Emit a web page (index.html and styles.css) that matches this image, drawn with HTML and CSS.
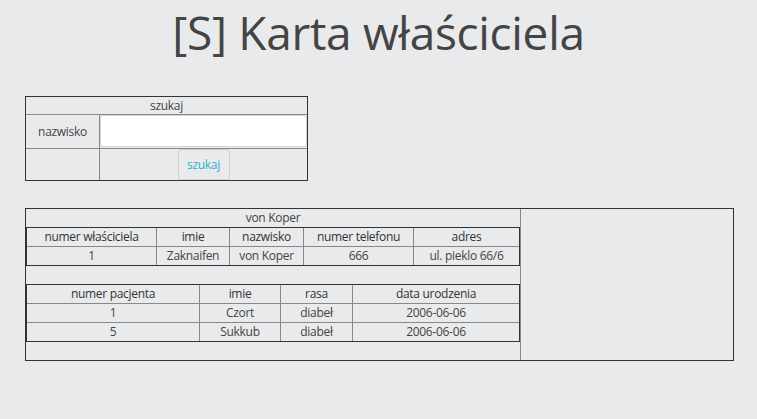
FILE: index.html
```html
<!DOCTYPE html>
<html lang="pl">
<head>
<meta charset="utf-8">
<title>[S] Karta właściciela</title>
<link rel="stylesheet" href="styles.css">
</head>
<body>
<h1 class="title">[S] Karta właściciela</h1>

<div class="search">
  <div class="cell head">szukaj</div>
  <div class="cell label">nazwisko</div>
  <div class="cell field"><input class="input" type="text"></div>
  <div class="cell"></div>
  <div class="cell btn-cell"><button class="btn" type="button">szukaj</button></div>
</div>

<div class="card">
  <div class="card-main">
    <div class="caption">von Koper</div>
    <div class="grid owner">
      <div class="c h">numer właściciela</div>
      <div class="c h">imie</div>
      <div class="c h">nazwisko</div>
      <div class="c h">numer telefonu</div>
      <div class="c h">adres</div>
      <div class="c">1</div>
      <div class="c">Zaknaifen</div>
      <div class="c">von Koper</div>
      <div class="c">666</div>
      <div class="c">ul. pieklo 66/6</div>
    </div>
    <div class="spacer"></div>
    <div class="grid pets">
      <div class="c h">numer pacjenta</div>
      <div class="c h">imie</div>
      <div class="c h">rasa</div>
      <div class="c h">data urodzenia</div>
      <div class="c">1</div>
      <div class="c">Czort</div>
      <div class="c">diabeł</div>
      <div class="c">2006-06-06</div>
      <div class="c">5</div>
      <div class="c">Sukkub</div>
      <div class="c">diabeł</div>
      <div class="c">2006-06-06</div>
    </div>
    <div class="spacer"></div>
  </div>
  <div class="card-side"></div>
</div>
</body>
</html>
```

FILE: styles.css
```css
html, body {
  background: #e9eaec;
}
body {
  margin: 0;
  padding: 8px 8px 8px 25px;
  font-family: "Open Sans", "DejaVu Sans", sans-serif;
  font-size: 12px;
  letter-spacing: -0.3px;
  color: #444;
}
.title {
  margin: 0 0 0 -17px;
  padding-top: 0;
  height: 88px;
  text-align: center;
  font-weight: 400;
  font-size: 46px;
  line-height: 48px;
  color: #444;
  letter-spacing: -0.3px;
}
.search {
  display: grid;
  grid-template-columns: 73px 207px;
  grid-template-rows: 17px 33px 31px;
  gap: 1px;
  width: max-content;
  background: #888;
  border: 1px solid #333;
}
.cell {
  background: #e9eaec;
  display: flex;
  align-items: center;
  justify-content: center;
  line-height: 17px;
}
.head {
  grid-column: 1 / span 2;
}
.field {
  align-items: flex-start;
}
.input {
  box-sizing: border-box;
  width: 207px;
  height: 32px;
  margin: 0;
  border: 1px solid #d4d4d4;
  border-radius: 3px;
  background: #fff;
}
.btn-cell {
  align-items: flex-start;
}
.btn {
  box-sizing: border-box;
  width: 52px;
  height: 31px;
  margin: 0;
  padding: 0;
  border: 1px solid #cfcfcf;
  border-radius: 3px;
  background: #e9eaec;
  color: #35aed1;
  font-family: inherit;
  font-size: 12px;
  letter-spacing: -0.3px;
}
.card {
  margin-top: 27px;
  display: grid;
  grid-template-columns: 494px 212px;
  gap: 1px;
  width: max-content;
  background: #888;
  border: 1px solid #333;
}
.card-main, .card-side {
  background: #e9eaec;
}
.caption {
  height: 18px;
  line-height: 17px;
  text-align: center;
}
.spacer {
  height: 18px;
}
.grid {
  display: grid;
  gap: 1px;
  background: #888;
  border: 1px solid #333;
}
.owner {
  grid-template-columns: 129px 72px 73px 109px 105px;
}
.pets {
  grid-template-columns: 172px 80px 71px 166px;
}
.c {
  background: #e9eaec;
  height: 18px;
  line-height: 18px;
  text-align: center;
  white-space: nowrap;
}
.h {
  color: #333;
}
```
